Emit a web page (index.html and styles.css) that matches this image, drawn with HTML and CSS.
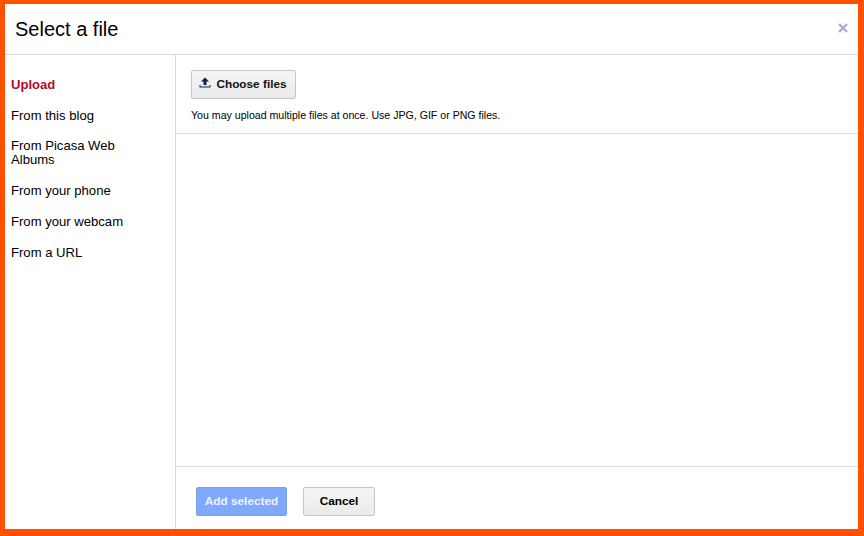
FILE: index.html
```html
<!DOCTYPE html>
<html lang="en">
<head>
<meta charset="utf-8">
<title>Select a file</title>
<link rel="stylesheet" href="styles.css">
</head>
<body>
<div class="dialog">
  <header class="header">
    <h1 class="title">Select a file</h1>
    <svg class="close" width="10" height="10" viewBox="0 0 10 10" aria-label="Close"><path d="M1 1L9 9M9 1L1 9" stroke="#a3aec8" stroke-width="2.4" fill="none"/></svg>
  </header>
  <div class="body">
    <nav class="nav">
      <a class="nav-item active">Upload</a>
      <a class="nav-item">From this blog</a>
      <a class="nav-item">From Picasa Web Albums</a>
      <a class="nav-item">From your phone</a>
      <a class="nav-item">From your webcam</a>
      <a class="nav-item">From a URL</a>
    </nav>
    <main class="main">
      <section class="upload">
        <button class="btn choose">
          <svg class="upload-icon" width="12" height="12" viewBox="0 0 12 12"><path d="M6 0.5L10 4.5H7.5V8H4.5V4.5H2Z M0.5 8V10.5H11.5V8H10.5V9.5H1.5V8Z" fill="#12205a"/></svg>
          Choose files
        </button>
        <p class="hint">You may upload multiple files at once. Use JPG, GIF or PNG files.</p>
      </section>
      <section class="list"></section>
      <footer class="footer">
        <button class="btn primary">Add selected</button>
        <button class="btn cancel">Cancel</button>
      </footer>
    </main>
  </div>
</div>
</body>
</html>
```
FILE: styles.css
```css
* { box-sizing: border-box; }
html, body { margin: 0; height: 100%; }
body { font-family: "Liberation Sans", Arial, sans-serif; color: #000; background: #fff; }
.dialog {
  width: 864px; height: 536px;
  border-style: solid; border-color: #ff5000;
  border-width: 4px 6px 7px 5px;
  display: flex; flex-direction: column; background: #fff;
}
.header {
  height: 51px; flex: none;
  border-bottom: 1px solid #d9d9d9;
  display: flex; align-items: center; justify-content: space-between;
  padding: 0 10px 0 10px;
}
.title { margin: 0; font-size: 20px; font-weight: 400; line-height: 24px; }
.close { display: block; margin-top: -2px; }
.body { flex: 1; display: flex; min-height: 0; }
.nav {
  width: 171px; flex: none;
  border-right: 1px solid #d9d9d9;
  padding: 23px 30px 0 6px;
  display: flex; flex-direction: column; gap: 16.72px;
}
.nav-item { display: block; font-size: 13.1px; line-height: 14px; color: #000; }
.nav-item.active { color: #b5092b; font-weight: 700; }
.main { flex: 1; display: flex; flex-direction: column; min-width: 0; }
.upload { height: 79px; flex: none; border-bottom: 1px solid #d9d9d9; padding: 15px 0 0 15px; }
.btn {
  font-family: inherit; font-size: 11.8px; font-weight: 700;
  height: 29px; border-radius: 2px; padding: 0 0 2px;
  display: inline-flex; align-items: center; justify-content: center;
  color: #000; background: linear-gradient(#f5f5f5, #eaeaea);
  border: 1px solid #c6c6c6;
}
.choose { width: 105px; gap: 5px; color: #111; }
.upload-icon { display: block; margin-top: -2px; margin-left: -1px; }
.hint { margin: 10px 0 0; font-size: 10.6px; line-height: 12px; color: #000; }
.list { flex: 1; }
.footer { height: 63px; flex: none; border-top: 1px solid #d9d9d9; padding: 20px 0 0 20px; display: flex; gap: 16px; align-items: flex-start; }
.primary { width: 91px; color: #eef3ff; background: #7fa9fb; border-color: #7aa0ee; }
.cancel { width: 72px; }
```
